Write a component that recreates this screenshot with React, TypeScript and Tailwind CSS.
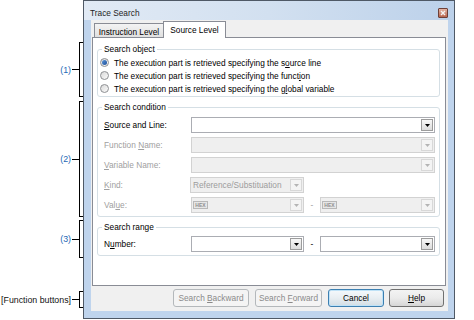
import React from 'react';

const Arrow = ({ enabled }: { enabled: boolean }) => (
  <div
    className={`w-[12px] h-[12px] shrink-0 flex items-center justify-center border ${
      enabled ? 'border-[#9c9c9c] bg-gradient-to-b from-[#f7f7f7] to-[#dcdcdc]' : 'border-[#d8d8d8] bg-[#f4f4f4]'
    }`}
  >
    <svg width="5" height="3" viewBox="0 0 5 3">
      <path d="M0 0H5L2.5 3Z" fill={enabled ? '#000' : '#b4b4b4'} />
    </svg>
  </div>
);

const Combo = ({ w, enabled = true, children }: { w: string; enabled?: boolean; children?: React.ReactNode }) => (
  <div
    className={`${w} h-[16px] border flex items-center pr-[1px] ${
      enabled ? 'border-[#abadb3] bg-white' : 'border-[#d2d2d2] bg-[#efefef]'
    }`}
  >
    <div className="flex-1 flex items-center pl-[1px] overflow-hidden">{children}</div>
    <Arrow enabled={enabled} />
  </div>
);

const Hex = () => (
  <span className="w-[15px] h-[8px] border border-[#b8b8b8] bg-[#e6e6e6] text-[5px] leading-[6px] text-center font-bold text-[#8e8e8e]">
    HEX
  </span>
);

const Radio = ({ checked, children }: { checked?: boolean; children: React.ReactNode }) => (
  <div className="h-[13px] flex items-center gap-[5px]">
    <span className="w-[9px] h-[9px] rounded-full border border-[#8e9093] bg-gradient-to-br from-[#d9d9d9] to-[#fbfbfb] flex items-center justify-center">
      {checked && <span className="w-[5px] h-[5px] rounded-full bg-gradient-to-br from-[#5b95d8] to-[#1d4f9a]" />}
    </span>
    <span>{children}</span>
  </div>
);

const Row = ({ label, disabled, children }: { label: React.ReactNode; disabled?: boolean; children: React.ReactNode }) => (
  <div className="h-[20px] flex items-center">
    <div className={`w-[91px] pl-[4px] ${disabled ? 'text-[#a0a0a0]' : 'text-black'}`}>{label}</div>
    {children}
  </div>
);

const Bracket = ({ label, h, mt, blue = true }: { label: string; h: string; mt: string; blue?: boolean }) => (
  <div className={`${h} ${mt} flex items-center justify-end`}>
    <span className={`text-[8.8px] leading-[10px] ${blue ? 'text-[#2369b5]' : 'text-[#111]'}`}>{label}</span>
    <span className="w-[7px] h-px bg-black ml-[1px]" />
    <span className="w-[4px] self-stretch border-l border-y border-black" />
  </div>
);

const Btn = ({ children, kind, w, ml }: { children: React.ReactNode; kind: 'off' | 'def' | 'on'; w: string; ml: string }) => (
  <div
    className={`${w} ${ml} h-[18px] rounded-[3px] border flex items-center justify-center ${
      kind === 'off'
        ? 'border-[#b4b8bb] bg-[#f4f4f4] text-[#8a8a8a]'
        : kind === 'def'
        ? 'border-[#3c7fb1] bg-gradient-to-b from-[#f4f9fc] via-[#e8eef2] to-[#d2dde4] shadow-[inset_0_0_0_1px_#bfe2f7] text-black'
        : 'border-[#707070] bg-gradient-to-b from-[#f3f3f3] via-[#ebebeb] to-[#d6d6d6] text-black'
    }`}
  >
    <span className="whitespace-nowrap">{children}</span>
  </div>
);

export default function App() {
  return (
    <div className="w-[474px] h-[320px] bg-white flex font-['Liberation_Sans',Arial,sans-serif] text-[8.3px] leading-[10px] text-black">
      {/* annotations */}
      <div className="w-[83px] flex flex-col">
        <Bracket label="(1)" h="h-[55px]" mt="mt-[42px]" />
        <Bracket label="(2)" h="h-[116px]" mt="mt-[4px]" />
        <Bracket label="(3)" h="h-[38px]" mt="mt-[3px]" />
        <Bracket label="[Function buttons]" h="h-[17px]" mt="mt-[33px]" blue={false} />
      </div>

      {/* window */}
      <div className="w-[372px] h-[319px] border border-[#4f5966] bg-[#bfd4ed] flex flex-col">
        <div className="h-[19px] shrink-0 flex items-center pt-[5px] pl-[6px] pr-[6px] bg-gradient-to-r from-[#e1eaf5] via-[#d2e0f0] to-[#bcd1ea]">
          <span className="flex-1 text-[#1e1e1e]">Trace Search</span>
          <div className="w-[10px] h-[10px] border border-[#6d4038] rounded-[1px] bg-gradient-to-b from-[#e3b3a3] to-[#b8664f] flex items-center justify-center">
            <svg width="6" height="6" viewBox="0 0 6 6">
              <path d="M1 1L5 5M5 1L1 5" stroke="#f4f4f4" strokeWidth="1.4" />
            </svg>
          </div>
        </div>

        <div className="ml-[7px] w-[357px] h-[291px] bg-[#f0f0f0] flex flex-col">
          {/* tabs */}
          <div className="h-[17px] ml-[3px] flex items-end">
            <div className="w-[70px] h-[14px] border border-b-0 border-[#898c95] bg-gradient-to-b from-[#f3f3f3] to-[#e0e0e0] flex items-center justify-center pt-[2px]">
              Instruction Level
            </div>
            <div className="relative z-10 -ml-[1px] -mb-[1px] w-[63px] h-[17px] border border-b-0 border-[#898c95] bg-white flex items-center justify-center">
              Source Level
            </div>
          </div>

          {/* panel */}
          <div className="ml-[1px] w-[354px] h-[249px] border border-[#898c95] bg-white flex flex-col">
            <fieldset className="ml-[4px] mr-[5px] mt-[6px] border border-[#d5dfe5] rounded-[3px] px-[2px] pt-[2px] pb-[1px]">
              <legend className="ml-[2px] px-[2px] leading-[10px]">Search object</legend>
              <Radio checked>
                The execution part is retrieved specifying the s<u className="underline-offset-[1px]">o</u>urce line
              </Radio>
              <Radio>
                The execution part is retrieved specifying the funct<u className="underline-offset-[1px]">i</u>on
              </Radio>
              <Radio>
                The execution part is retrieved specifying the g<u className="underline-offset-[1px]">l</u>obal variable
              </Radio>
            </fieldset>

            <fieldset className="ml-[4px] mr-[5px] mt-[5px] border border-[#d5dfe5] rounded-[3px] px-[2px] pt-[3px] pb-[1px]">
              <legend className="ml-[2px] px-[2px] leading-[10px]">Search condition</legend>
              <Row label={<><u className="underline-offset-[1px]">S</u>ource and Line:</>}>
                <Combo w="w-[244px]" />
              </Row>
              <Row disabled label={<>Function <u className="underline-offset-[1px]">N</u>ame:</>}>
                <Combo w="w-[244px]" enabled={false} />
              </Row>
              <Row disabled label={<><u className="underline-offset-[1px]">V</u>ariable Name:</>}>
                <Combo w="w-[244px]" enabled={false} />
              </Row>
              <Row disabled label={<><u className="underline-offset-[1px]">K</u>ind:</>}>
                <div className="-ml-[1px]">
                  <Combo w="w-[114px]" enabled={false}>
                    <span className="pl-[1px] text-[#9c9c9c] whitespace-nowrap">Reference/Substituation</span>
                  </Combo>
                </div>
              </Row>
              <Row disabled label={<>Val<u className="underline-offset-[1px]">u</u>e:</>}>
                <Combo w="w-[113px]" enabled={false}>
                  <Hex />
                </Combo>
                <span className="w-[16px] text-center text-[#a0a0a0]">-</span>
                <Combo w="w-[115px]" enabled={false}>
                  <Hex />
                </Combo>
              </Row>
            </fieldset>

            <fieldset className="ml-[4px] mr-[5px] mt-[5px] border border-[#d5dfe5] rounded-[3px] px-[2px] pt-[2px] pb-[1px]">
              <legend className="ml-[2px] px-[2px] leading-[10px]">Search range</legend>
              <Row label={<>N<u className="underline-offset-[1px]">u</u>mber:</>}>
                <Combo w="w-[113px]" />
                <span className="w-[16px] text-center">-</span>
                <Combo w="w-[115px]" />
              </Row>
            </fieldset>
          </div>

          {/* function buttons */}
          <div className="mt-[3px] pr-[4px] flex justify-end">
            <Btn kind="off" w="w-[76px]" ml="ml-0">
              Search <u className="underline-offset-[1px]">B</u>ackward
            </Btn>
            <Btn kind="off" w="w-[67px]" ml="ml-[6px]">
              Search <u className="underline-offset-[1px]">F</u>orward
            </Btn>
            <Btn kind="def" w="w-[56px]" ml="ml-[6px]">
              Cancel
            </Btn>
            <Btn kind="on" w="w-[55px]" ml="ml-[5px]">
              <u className="underline-offset-[1px]">H</u>elp
            </Btn>
          </div>
        </div>
      </div>
    </div>
  );
}
